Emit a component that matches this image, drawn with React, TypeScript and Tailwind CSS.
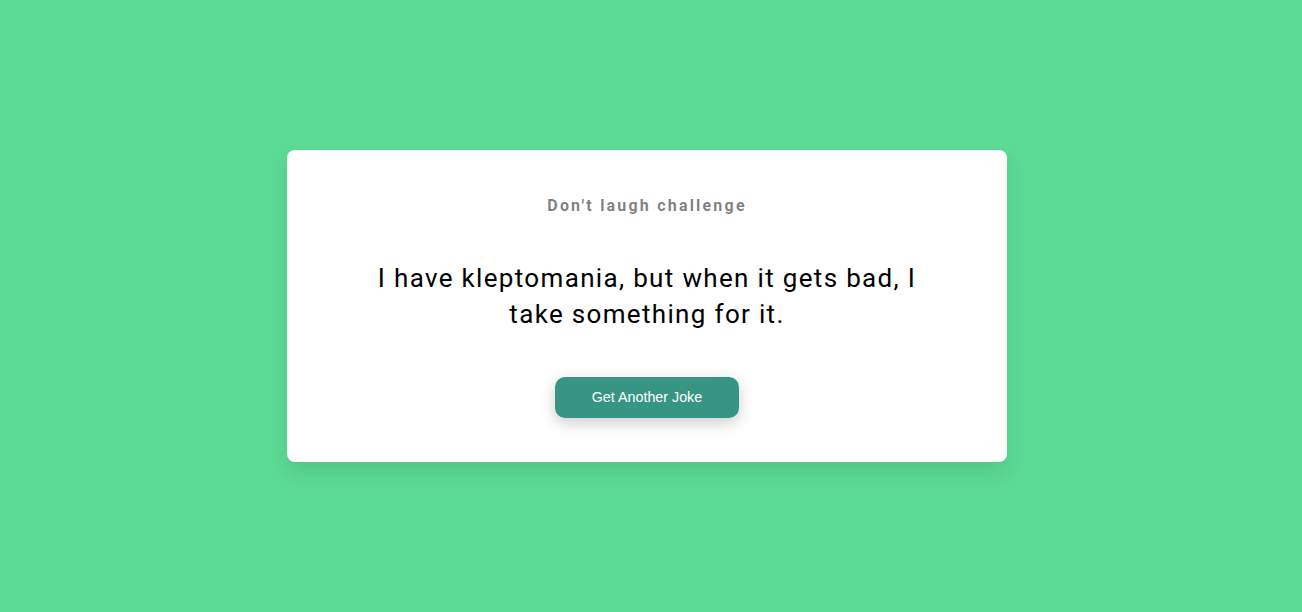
export default function App() {
  return (
    <main className="flex min-h-screen items-center justify-center bg-[#5cdb95] pr-2 font-['Roboto',sans-serif]">
      <div className="flex w-[720px] flex-col items-center rounded-lg bg-white px-5 pt-[46px] pb-[44px] text-center shadow-[0_10px_20px_rgba(0,0,0,0.1)]">
        <h3 className="text-base leading-5 font-bold tracking-[2.2px] text-black/50">Don't laugh challenge</h3>
        <div className="mx-auto mt-[44px] mb-[45px] max-w-[580px] text-[26px] leading-9 tracking-[1.33px] text-black">
          I have kleptomania, but when it gets bad, I take something for it.
        </div>
        <button className="h-[41px] w-[184px] rounded-[10px] bg-[#379683] font-['Liberation_Sans',Arial,sans-serif] text-[14.3px] text-white shadow-[0_5px_15px_rgba(0,0,0,0.2)]">
          Get Another Joke
        </button>
      </div>
    </main>
  );
}
